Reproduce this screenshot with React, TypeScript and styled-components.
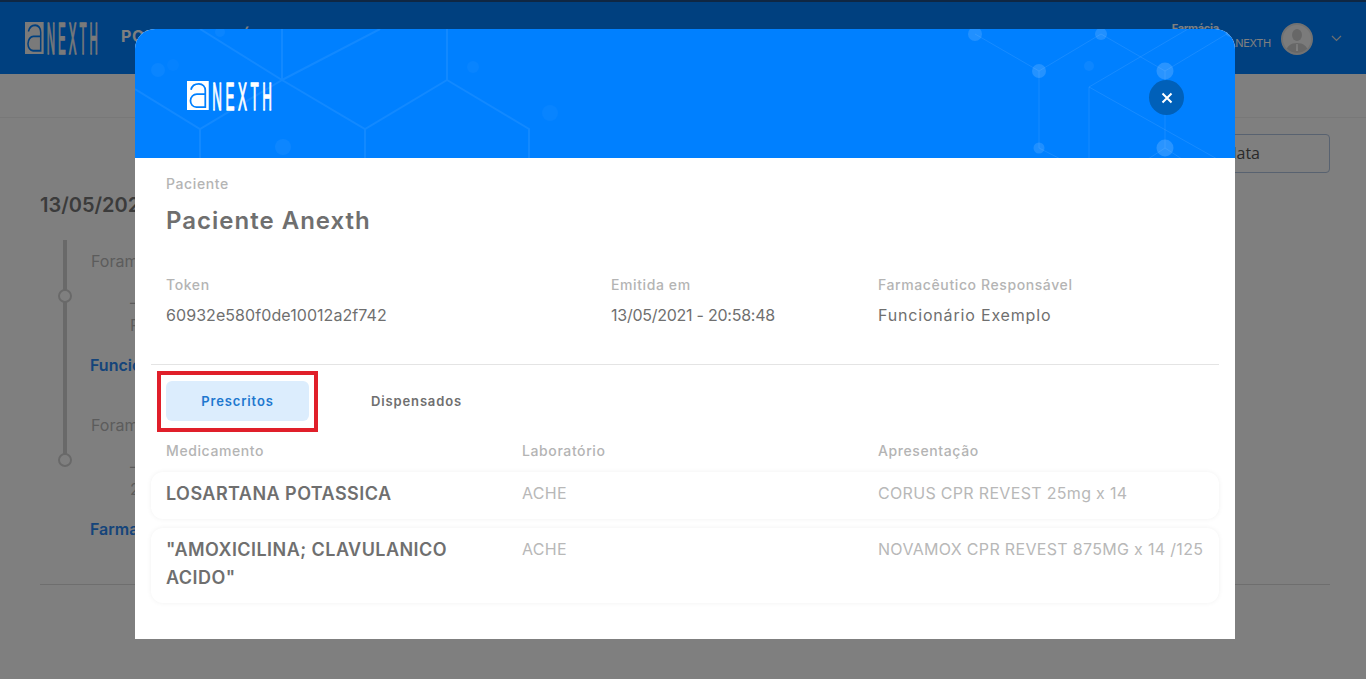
import React from "react";
import styled, { createGlobalStyle } from "styled-components";

const Global = createGlobalStyle`
  html, body { margin: 0; padding: 0; background: #fff; }
  body { font-family: Inter, "Open Sans", "Liberation Sans", sans-serif; overflow: hidden; }
  * { box-sizing: border-box; }
`;

const Page = styled.div`
  position: relative;
  width: 1366px;
  height: 679px;
  overflow: hidden;
  background: #fff;
`;
const TopBar = styled.header`
  height: 74px;
  background: #0080ff;
  border-top: 2px solid #1f4f86;
  display: flex;
  align-items: center;
  padding: 0 24px 0 25px;
`;
const BarTitle = styled.div`
  margin: -4px 0 0 23px;
  font-size: 16px;
  font-weight: 700;
  letter-spacing: 0.6px;
  color: #fff;
  flex: 1;
`;
const UserBlock = styled.div`
  display: flex;
  flex-direction: column;
  margin: -5px 10px 0 0;
  font-size: 11px;
  line-height: 15px;
  letter-spacing: -0.3px;
  color: #fff;
`;
const UserRole = styled.strong`
  font-size: 11px;
`;
const Avatar = styled.div`
  width: 32px;
  height: 32px;
  margin: 2px 18px 0 0;
  border-radius: 50%;
  border: 2px solid #e4e4e4;
  background: #f6f6f6;
  overflow: hidden;
`;
const SubBar = styled.div`
  height: 44px;
  background: #fff;
  border-bottom: 1px solid #f0f0f0;
`;
const Content = styled.main`
  padding: 16px 36px 0 40px;
`;
const FilterRow = styled.div`
  display: flex;
  justify-content: flex-end;
`;
const FilterButton = styled.button`
  width: 190px;
  height: 39px;
  border: 1px solid #b0c4e0;
  border-radius: 4px;
  background: #fff;
  font: 400 16px "Open Sans", sans-serif;
  color: #555;
  text-align: right;
  padding: 0 69px 2px 0;
`;
const DateTitle = styled.h2`
  margin: 20px 0 0;
  font-size: 20px;
  font-weight: 600;
  color: #777;
`;
const Timeline = styled.div`
  position: relative;
  margin: 23px 0 0 23px;
  width: 600px;
  padding: 11px 0 0 28px;
`;
const Rail = styled.span`
  position: absolute;
  left: 0;
  top: 0;
  width: 4px;
  height: 220px;
  background: #d2d2d2;
`;
const Dot = styled.span<{ $top: number }>`
  position: absolute;
  left: -5px;
  top: ${(p) => p.$top}px;
  width: 14px;
  height: 14px;
  border-radius: 50%;
  border: 2px solid #d2d2d2;
  background: #fff;
`;
const StepText = styled.div`
  font-size: 16px;
  line-height: 21px;
  color: #b8b8b8;
`;
const StepDash = styled.div`
  margin: 19px 0 0 39px;
  font-size: 16px;
  line-height: 23px;
  color: #b8b8b8;
`;
const StepLink = styled.div`
  margin: 17px 0 39px -1px;
  font-size: 16px;
  line-height: 22px;
  font-weight: 600;
  color: #2a88f5;
`;
const PageRule = styled.hr`
  margin: 0;
  border: 0;
  border-top: 1px solid #ddd;
  position: absolute;
  left: 40px;
  right: 36px;
  top: 584px;
`;

const Backdrop = styled.div`
  position: absolute;
  inset: 0;
  background: rgba(0, 0, 0, 0.5);
`;
const Modal = styled.section`
  position: absolute;
  left: 135px;
  top: 29px;
  width: 1100px;
  height: 610px;
  background: #fff;
  border-radius: 20px 20px 0 0;
  overflow: hidden;
`;
const ModalHead = styled.div`
  position: relative;
  height: 129px;
  background: #0080ff;
  display: flex;
  align-items: center;
  justify-content: space-between;
  padding: 4px 51px 0 52px;
`;
const Pattern = styled.svg`
  position: absolute;
  inset: 0;
`;
const LogoSvg = styled.svg`
  position: relative;
  display: block;
  overflow: visible;
`;
const CloseButton = styled.button`
  position: relative;
  width: 35px;
  height: 35px;
  margin-top: 4px;
  border-radius: 50%;
  border: 0;
  padding: 0;
  background: #0060b9;
  display: flex;
  align-items: center;
  justify-content: center;
`;
const ModalBody = styled.div`
  padding: 17px 16px 0;
`;
const Inset = styled.div`
  padding: 0 15px;
`;
const Label = styled.div`
  font-size: 14px;
  line-height: 18px;
  font-weight: 500;
  color: #b4b4b4;
  letter-spacing: 0.6px;
`;
const PatientName = styled.h1`
  margin: 13px 0 0;
  font-size: 24px;
  line-height: 30px;
  font-weight: 600;
  color: #6f6f6f;
  letter-spacing: 1px;
`;
const InfoGrid = styled.div`
  display: grid;
  grid-template-columns: 5fr 3fr 4fr;
  margin-top: 40px;
  padding-bottom: 38px;
  border-bottom: 1px solid #e4e4e4;
`;
const InfoCell = styled.div`
  padding-left: 15px;
`;
const Value = styled.div<{ $track: number }>`
  margin-top: 10px;
  font-size: 16px;
  line-height: 22px;
  color: #6f6f6f;
  letter-spacing: ${(p) => p.$track}px;
`;
const Tabs = styled.div`
  display: flex;
  gap: 36px;
  padding: 16px 15px 0;
`;
const Tab = styled.button<{ $active?: boolean }>`
  position: relative;
  width: 143px;
  height: 40px;
  border: 0;
  border-radius: 6px;
  padding: 0;
  font-family: inherit;
  font-size: 13px;
  font-weight: 600;
  letter-spacing: 0.85px;
  color: ${(p) => (p.$active ? "#1e78cf" : "#6f6f6f")};
  background: ${(p) => (p.$active ? "#dcedfd" : "#fff")};
  ${(p) =>
    p.$active &&
    `&::after {
      content: "";
      position: absolute;
      inset: -10px -9px -11px;
      border: 4px solid #e01f2a;
    }`}
`;
const MedHead = styled.div`
  display: grid;
  grid-template-columns: repeat(3, 1fr);
  margin-top: 21px;
`;
const HeadCell = styled(Label)`
  padding-left: 15px;
`;
const MedList = styled.div`
  display: flex;
  flex-direction: column;
  gap: 9px;
  margin-top: 12px;
`;
const MedRow = styled.div`
  display: grid;
  grid-template-columns: repeat(3, 1fr);
  padding: 8px 0 11px;
  border-radius: 12px;
  background: #fff;
  box-shadow: 0 0 5px rgba(0, 0, 0, 0.06);
`;
const MedName = styled.div`
  padding-left: 15px;
  font-size: 18px;
  line-height: 28px;
  font-weight: 600;
  color: #6f6f6f;
  letter-spacing: 0.45px;
`;
const MedCell = styled.div`
  margin-top: -1px;
  padding-left: 15px;
  font-size: 16px;
  line-height: 28px;
  color: #b8b8b8;
  letter-spacing: 0.32px;
  white-space: nowrap;
`;

function Logo({ color, gap, width, height }: { color: string; gap: string; width: number; height: number }) {
  return (
    <LogoSvg width={width} height={height} viewBox="0 0 86 30" preserveAspectRatio="none">
      <path d="M0 0H22V30H0Z" fill={color} />
      <path
        d="M4 9C5 5 8.5 3 12 3C16 3 18.5 6 18.5 9.5V27H9.5C6 27 3.5 24 3.5 20.5C3.5 16.5 6.5 13.5 10 13.5H18.5"
        fill="none"
        stroke={gap}
        strokeWidth="1.8"
      />
      <text
        transform="translate(25.5 30) scale(0.33 1)"
        fill={color}
        stroke={color}
        strokeWidth="1.4"
        fontFamily="'Liberation Sans', sans-serif"
        fontSize="41"
        letterSpacing="11"
      >
        NEXTH
      </text>
    </LogoSvg>
  );
}

const hexNodes: [number, number, number, number][] = [
  [23, 41, 7, 0.04], [38, 36, 6, 0.02], [148, 118, 8, 0.05], [415, 84, 8, 0.03], [85, 3, 5, 0.04], [338, 38, 6, 0.03],
  [840, 5, 7, 0.13], [966, 5, 6, 0.13], [954, 37, 5, 0.05], [904, 42, 7, 0.14], [1030, 42, 8.5, 0.16],
  [1030, 119, 8.5, 0.16], [904, 119, 5.5, 0.12], [1096, 2, 6, 0.13],
];

function HexPattern() {
  return (
    <Pattern width={1100} height={129} viewBox="0 0 1100 129">
      <path
        d="M65 0L147 51V0M147 51L230 100L312 51V0M312 51L394 100V129M230 100V129M147 51L65 100L0 60M65 100V129M147 51L245 0"
        fill="none"
        stroke="#fff"
        strokeOpacity="0.07"
        strokeWidth="2"
      />
      <path
        d="M840 5L904 42L966 5L1030 42L1100 0M904 42V119L945 140M1030 42V119L990 145M1030 119L1070 145M954 129V58L1070 -10M954 58L1100 140"
        fill="none"
        stroke="#fff"
        strokeOpacity="0.09"
        strokeWidth="1"
      />
      {hexNodes.map(([x, y, r, o]) => (
        <circle key={`${x}-${y}`} cx={x} cy={y} r={r} fill="#fff" fillOpacity={o} />
      ))}
    </Pattern>
  );
}

const meds = [
  { name: "LOSARTANA POTASSICA", lab: "ACHE", form: "CORUS CPR REVEST 25mg x 14" },
  { name: '"AMOXICILINA; CLAVULANICO ACIDO"', lab: "ACHE", form: "NOVAMOX CPR REVEST 875MG x 14 /125" },
];

export default function App() {
  return (
    <Page>
      <Global />
      <TopBar>
        <Logo color="#f4f4f4" gap="#0080ff" width={73} height={32} />
        <BarTitle>PORTAL FARMÁCIA</BarTitle>
        <UserBlock>
          <UserRole>Farmácia</UserRole>
          <span>FARMÁCIA ANEXTH</span>
        </UserBlock>
        <Avatar>
          <svg width="28" height="28" viewBox="0 0 28 28">
            <ellipse cx="14" cy="10" rx="5" ry="6" fill="#cfcfcf" />
            <path d="M3 28C3 21 8 18 14 18S25 21 25 28Z" fill="#cfcfcf" />
            <path d="M13.3 19H14.7L15 26H13Z" fill="#fff" />
          </svg>
        </Avatar>
        <svg width="11" height="7" viewBox="0 0 11 7">
          <path d="M1 1L5.5 5.5L10 1" fill="none" stroke="#ddd" strokeWidth="1.2" />
        </svg>
      </TopBar>
      <SubBar />
      <Content>
        <FilterRow>
          <FilterButton>Filtrar por data</FilterButton>
        </FilterRow>
        <DateTitle>13/05/2021</DateTitle>
        <Timeline>
          <Rail />
          <Dot $top={49} />
          <Dot $top={213} />
          <StepText>Foram prescritos</StepText>
          <StepDash>
            —<br />Prescrição
          </StepDash>
          <StepLink>Funcionário Exemplo</StepLink>
          <StepText>Foram dispensados</StepText>
          <StepDash>
            —<br />2 itens
          </StepDash>
          <StepLink>Farmacêutico</StepLink>
        </Timeline>
      </Content>
      <PageRule />
      <Backdrop />
      <Modal>
        <ModalHead>
          <HexPattern />
          <Logo color="#ffffff" gap="#0080ff" width={85} height={29} />
          <CloseButton aria-label="Fechar">
            <svg width="12" height="12" viewBox="0 0 12 12">
              <path d="M1.5 1.5L10.5 10.5M10.5 1.5L1.5 10.5" stroke="#fff" strokeWidth="2" />
            </svg>
          </CloseButton>
        </ModalHead>
        <ModalBody>
          <Inset>
            <Label>Paciente</Label>
            <PatientName>Paciente Anexth</PatientName>
          </Inset>
          <InfoGrid>
            <InfoCell>
              <Label>Token</Label>
              <Value $track={0.07}>60932e580f0de10012a2f742</Value>
            </InfoCell>
            <InfoCell>
              <Label>Emitida em</Label>
              <Value $track={-0.25}>13/05/2021 - 20:58:48</Value>
            </InfoCell>
            <InfoCell>
              <Label>Farmacêutico Responsável</Label>
              <Value $track={0.82}>Funcionário Exemplo</Value>
            </InfoCell>
          </InfoGrid>
          <Tabs>
            <Tab $active>Prescritos</Tab>
            <Tab>Dispensados</Tab>
          </Tabs>
          <MedHead>
            <HeadCell>Medicamento</HeadCell>
            <HeadCell>Laboratório</HeadCell>
            <HeadCell>Apresentação</HeadCell>
          </MedHead>
          <MedList>
            {meds.map((m) => (
              <MedRow key={m.form}>
                <MedName>{m.name}</MedName>
                <MedCell>{m.lab}</MedCell>
                <MedCell>{m.form}</MedCell>
              </MedRow>
            ))}
          </MedList>
        </ModalBody>
      </Modal>
    </Page>
  );
}
